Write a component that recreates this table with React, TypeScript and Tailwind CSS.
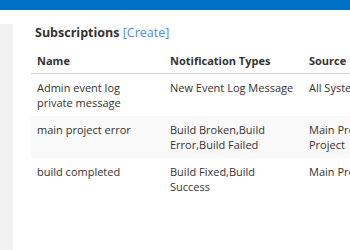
import React from "react";

type Subscription = {
  name: string;
  types: string;
  source: string;
};

const subscriptions: Subscription[] = [
  { name: "Admin event log private message", types: "New Event Log Message", source: "All Systems" },
  { name: "main project error", types: "Build Broken,Build Error,Build Failed", source: "Main Project,Legacy Project" },
  { name: "build completed", types: "Build Fixed,Build Success", source: "Main Project" },
];

export default function App() {
  return (
    <div className="h-[250px] w-[350px] overflow-hidden bg-white font-['Open_Sans',sans-serif] text-[#333]">
      {/* top app bar */}
      <div className="h-[10px] bg-[#0072c6]" />

      <div className="flex pt-[14px]">
        {/* side nav strip */}
        <div className="h-[240px] w-[13px] shrink-0 bg-[#f2f2f2]" />

        <div className="ml-[18px] min-w-0 flex-1">
          <h2 className="ml-[4px] text-[12.5px] font-bold leading-[18px]">
            Subscriptions{" "}
            <a href="#" className="font-normal text-[#4a8ce8]">
              [Create]
            </a>
          </h2>

          <table className="mt-[8px] w-[400px] table-fixed border-collapse text-[11px] leading-[15px]">
            <colgroup>
              <col className="w-[133px]" />
              <col className="w-[139px]" />
              <col />
            </colgroup>
            <thead>
              <tr className="border-b border-[#cfcfcf]">
                <th className="px-[6px] pb-[5px] pt-[3px] text-left font-bold">Name</th>
                <th className="px-[6px] pb-[5px] pt-[3px] text-left font-bold">Notification Types</th>
                <th className="px-[6px] pb-[5px] pt-[3px] text-left font-bold">Source</th>
              </tr>
            </thead>
            <tbody>
              {subscriptions.map((s, i) => (
                <tr key={s.name} className={i % 2 === 1 ? "bg-[#f9f9f9]" : ""}>
                  <td className="px-[6px] py-[6px] align-top">{s.name}</td>
                  <td className="px-[6px] py-[6px] align-top">{s.types}</td>
                  <td className="px-[6px] py-[6px] align-top">{s.source}</td>
                </tr>
              ))}
            </tbody>
          </table>
        </div>
      </div>
    </div>
  );
}
